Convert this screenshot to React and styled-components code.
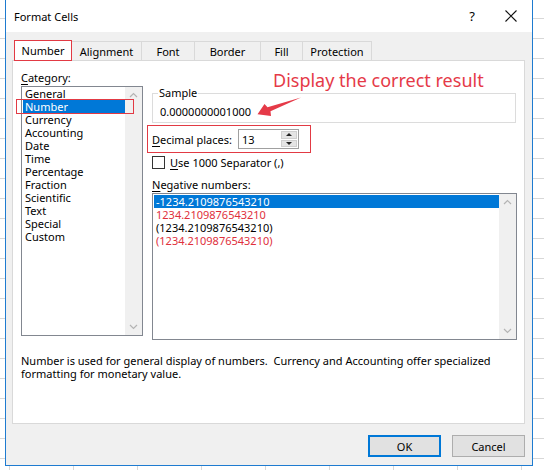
import React from 'react'
import styled, { createGlobalStyle, css } from 'styled-components'

const GlobalStyle = createGlobalStyle`
  html, body { margin: 0; padding: 0; }
  body { font-family: "Noto Sans", "Open Sans", sans-serif; font-size: 11px; color: #000; }
`

const UI_FONT = `"Noto Sans", "Open Sans", sans-serif`

const Page = styled.div`
  width: 544px;
  height: 470px;
  overflow: hidden;
  box-sizing: border-box;
  padding-left: 5px;
  background-color: #fff;
  background-image:
    linear-gradient(#d8d8d8 1px, transparent 1px),
    linear-gradient(90deg, #d8d8d8 1px, transparent 1px);
  background-size: 64px 20px;
  background-position: 9px 18px;
`

const Dialog = styled.div`
  width: 528px;
  height: 466px;
  box-sizing: border-box;
  border: 1px solid #1e7bd0;
  border-top: none;
  background: #f0f0f0;
  display: flex;
  flex-direction: column;
  font-family: ${UI_FONT};
  font-size: 11px;
`

const TitleBar = styled.div`
  height: 32px;
  flex: none;
  background: #fff;
  display: flex;
  align-items: center;
  padding-left: 8px;
`

const Title = styled.span`
  flex: 1;
  font-size: 11px;
`

const HelpGlyph = styled.span`
  font-size: 13px;
  width: 20px;
  text-align: center;
  margin-right: 23px;
`

const CloseGlyph = styled.svg`
  width: 12px;
  height: 12px;
  margin-right: 15px;
`

const Body = styled.div`
  flex: 1;
  display: flex;
  flex-direction: column;
  padding: 9px 7px 0 6px;
`

const Tabs = styled.div`
  display: flex;
  margin-left: 3px;
  height: 19px;
`

const Tab = styled.div`
  width: ${(p) => p.$w}px;
  box-sizing: border-box;
  display: flex;
  align-items: center;
  justify-content: center;
  border: 1px solid #d9d9d9;
  border-bottom: none;
  margin-left: -1px;
  background: #f0f0f0;
  ${(p) =>
    p.$active &&
    css`
      background: #fff;
      border: 1px solid #e23a44;
      height: 21px;
      margin-top: -1px;
      position: relative;
      z-index: 1;
    `}
`

const Panel = styled.div`
  position: relative;
  height: 364px;
  box-sizing: border-box;
  background: #fff;
  border: 1px solid #d9d9d9;
  padding: 10px 0 0 8px;
`

const Annotation = styled.div`
  position: absolute;
  left: 260px;
  top: 7px;
  font-size: 18px;
  line-height: 24px;
  color: #e53a48;
  white-space: nowrap;
`

const Arrow = styled.svg`
  position: absolute;
  left: 238px;
  top: 30px;
  width: 55px;
  height: 30px;
`

const Columns = styled.div`
  display: grid;
  grid-template-columns: 122px 365px;
  column-gap: 9px;
`

const Column = styled.div`
  display: flex;
  flex-direction: column;
`

const Label = styled.div`
  line-height: 13px;
  height: 13px;
  margin-top: ${(p) => p.$top || 0}px;
  margin-bottom: 2px;
  white-space: nowrap;
  u { text-decoration: underline; text-underline-offset: 2px; }
`

const ListBox = styled.div`
  height: ${(p) => p.$h}px;
  box-sizing: border-box;
  border: 1px solid #828790;
  display: flex;
  background: #fff;
`

const ListItems = styled.div`
  flex: 1;
  padding-top: ${(p) => p.$pad || 0}px;
  padding-left: 1px;
`

const Item = styled.div`
  position: relative;
  height: 13px;
  line-height: 13px;
  padding-left: ${(p) => p.$indent}px;
  white-space: nowrap;
  color: ${(p) => (p.$red ? '#e0303c' : '#000')};
  ${(p) =>
    p.$selected &&
    css`
      background: #0078d7;
      color: #fff;
    `}
  ${(p) =>
    p.$marked &&
    css`
      &::after {
        content: '';
        position: absolute;
        left: -7px;
        right: -9px;
        top: -1px;
        bottom: -1px;
        border: 1px solid #e23a44;
      }
    `}
`

const ScrollBar = styled.div`
  width: 17px;
  flex: none;
  background: #f0f0f0;
  display: flex;
  flex-direction: column;
  justify-content: space-between;
  align-items: center;
  padding: 5px 0;
  box-sizing: border-box;
`

const Chevron = styled.svg`
  width: 9px;
  height: 6px;
`

const SampleBox = styled.fieldset`
  margin: 15px 0 0 0;
  padding: 0 0 0 5px;
  border: 1px solid #dcdcdc;
  width: 364px;
  box-sizing: border-box;
  height: 37px;
  legend {
    padding: 0 1px;
    line-height: 14px;
  }
`

const SampleValue = styled.div`
  padding-left: 2px;
  margin-top: 5px;
  line-height: 13px;
`

const DecimalRow = styled.div`
  margin: 2px 0 0 -5px;
  width: 164px;
  height: 28px;
  box-sizing: border-box;
  border: 1px solid #e23a44;
  display: flex;
  align-items: center;
  padding-left: 4px;
  white-space: nowrap;
  u { text-decoration: underline; text-underline-offset: 2px; }
`

const Spinner = styled.div`
  margin-left: auto;
  margin-right: 11px;
  width: 61px;
  height: 20px;
  box-sizing: border-box;
  border: 1px solid #a0a0a0;
  display: flex;
  align-items: center;
`

const SpinValue = styled.span`
  flex: 1;
  padding-left: 3px;
`

const SpinButtons = styled.div`
  display: flex;
  flex-direction: column;
  gap: 1px;
  width: 16px;
  height: 16px;
  margin-right: 1px;
`

const SpinButton = styled.div`
  flex: 1;
  background: #e5e5e5;
  border: 1px solid #cfcfcf;
  display: flex;
  align-items: center;
  justify-content: center;
  &::before {
    content: '';
    border-left: 3px solid transparent;
    border-right: 3px solid transparent;
    ${(p) => (p.$down ? 'border-top: 3px solid #222;' : 'border-bottom: 3px solid #222;')}
  }
`

const CheckRow = styled.div`
  margin-top: 2px;
  display: flex;
  align-items: center;
  gap: 5px;
  height: 14px;
  white-space: nowrap;
  u { text-decoration: underline; text-underline-offset: 2px; }
`

const CheckBox = styled.span`
  width: 13px;
  height: 13px;
  box-sizing: border-box;
  border: 1px solid #333;
  background: #fff;
`

const Description = styled.div`
  margin-top: 14px;
  line-height: 13px;
  white-space: pre;
`

const Footer = styled.div`
  display: flex;
  justify-content: flex-end;
  gap: 11px;
  padding-top: 11px;
`

const Button = styled.div`
  width: 73px;
  height: 22px;
  box-sizing: border-box;
  background: #e1e1e1;
  border: 1px solid ${(p) => (p.$primary ? '#0078d7' : '#adadad')};
  ${(p) => p.$primary && 'box-shadow: inset 0 0 0 1px #0078d7;'}
  display: flex;
  align-items: center;
  justify-content: center;
`

const tabs = [
  { name: 'Number', w: 58, active: true },
  { name: 'Alignment', w: 71 },
  { name: 'Font', w: 54 },
  { name: 'Border', w: 67 },
  { name: 'Fill', w: 43 },
  { name: 'Protection', w: 70 },
]

const categories = [
  'General', 'Number', 'Currency', 'Accounting', 'Date', 'Time',
  'Percentage', 'Fraction', 'Scientific', 'Text', 'Special', 'Custom',
]

const negatives = [
  { text: '-1234.2109876543210', selected: true },
  { text: '1234.2109876543210', red: true },
  { text: '(1234.2109876543210)' },
  { text: '(1234.2109876543210)', red: true },
]

function Scroll() {
  return (
    <ScrollBar>
      <Chevron viewBox="0 0 9 6"><path d="M1 5 L4.5 1.5 L8 5" fill="none" stroke="#b4b4b4" strokeWidth="1.2" /></Chevron>
      <Chevron viewBox="0 0 9 6"><path d="M1 1 L4.5 4.5 L8 1" fill="none" stroke="#b4b4b4" strokeWidth="1.2" /></Chevron>
    </ScrollBar>
  )
}

export default function App() {
  return (
    <>
      <GlobalStyle />
      <Page>
        <Dialog>
          <TitleBar>
            <Title>Format Cells</Title>
            <HelpGlyph>?</HelpGlyph>
            <CloseGlyph viewBox="0 0 12 12">
              <path d="M0.5 0.5 L11.5 11.5 M11.5 0.5 L0.5 11.5" stroke="#111" strokeWidth="1.1" />
            </CloseGlyph>
          </TitleBar>
          <Body>
            <Tabs>
              {tabs.map((t) => (
                <Tab key={t.name} $w={t.w} $active={t.active}>{t.name}</Tab>
              ))}
            </Tabs>
            <Panel>
              <Annotation>Display the correct result</Annotation>
              <Arrow viewBox="0 0 55 30">
                <polygon points="6.5,23.3 13.5,13 16.5,16.2 50,6.5 19.5,20.3 20,25" fill="#e53a48" />
              </Arrow>
              <Columns>
                <Column>
                  <Label><u>C</u>ategory:</Label>
                  <ListBox $h={250}>
                    <ListItems>
                      {categories.map((c) => (
                        <Item key={c} $indent={2} $selected={c === 'Number'} $marked={c === 'Number'}>{c}</Item>
                      ))}
                    </ListItems>
                    <Scroll />
                  </ListBox>
                </Column>
                <Column>
                  <SampleBox>
                    <legend>Sample</legend>
                    <SampleValue>0.0000000001000</SampleValue>
                  </SampleBox>
                  <DecimalRow>
                    <span><u>D</u>ecimal places:</span>
                    <Spinner>
                      <SpinValue>13</SpinValue>
                      <SpinButtons>
                        <SpinButton />
                        <SpinButton $down />
                      </SpinButtons>
                    </Spinner>
                  </DecimalRow>
                  <CheckRow>
                    <CheckBox />
                    <span><u>U</u>se 1000 Separator (,)</span>
                  </CheckRow>
                  <Label $top={9}><u>N</u>egative numbers:</Label>
                  <ListBox $h={147}>
                    <ListItems $pad={1}>
                      {negatives.map((n, i) => (
                        <Item key={i} $indent={2} $red={n.red} $selected={n.selected}>{n.text}</Item>
                      ))}
                    </ListItems>
                    <Scroll />
                  </ListBox>
                </Column>
              </Columns>
              <Description>
                {'Number is used for general display of numbers.  Currency and Accounting offer specialized\nformatting for monetary value.'}
              </Description>
            </Panel>
            <Footer>
              <Button $primary>OK</Button>
              <Button>Cancel</Button>
            </Footer>
          </Body>
        </Dialog>
      </Page>
    </>
  )
}
